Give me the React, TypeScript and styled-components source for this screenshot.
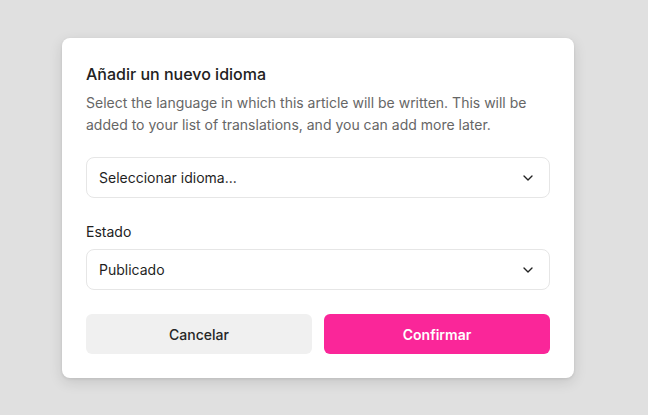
import React from "react";
import styled, { createGlobalStyle } from "styled-components";
import { ChevronDown } from "lucide-react";

const Global = createGlobalStyle`
  html, body { margin: 0; padding: 0; background: #e0e0e0; }
  body { font-family: Inter, "Noto Sans", sans-serif; -webkit-font-smoothing: antialiased; }
  * { box-sizing: border-box; }
`;

const Page = styled.div`
  width: 648px;
  height: 415px;
  display: flex;
  align-items: flex-start;
  padding: 38px 0 0 62px;
`;

const Card = styled.div`
  width: 512px;
  background: #ffffff;
  border-radius: 8px;
  box-shadow: 0 4px 14px rgba(0, 0, 0, 0.12), 0 1px 3px rgba(0, 0, 0, 0.08);
  padding: 24px;
  display: flex;
  flex-direction: column;
`;

const Title = styled.h2`
  margin: 0;
  font-size: 16px;
  line-height: 24px;
  font-weight: 500;
  color: #222222;
`;

const Description = styled.p`
  margin: 6px 0 0;
  font-size: 14px;
  line-height: 22px;
  color: #666666;
`;

const Field = styled.div<{ $top: number }>`
  margin-top: ${(p) => p.$top}px;
  display: flex;
  flex-direction: column;
  gap: 7px;
`;

const Label = styled.div`
  font-size: 14px;
  line-height: 20px;
  font-weight: 400;
  color: #222222;
`;

const Select = styled.div`
  height: 41px;
  border: 1px solid #e6e6e6;
  border-radius: 8px;
  padding: 0 13px 0 12px;
  display: flex;
  align-items: center;
  justify-content: space-between;
  font-size: 14px;
  color: #1f1f1f;
  background: #fff;
`;

const Actions = styled.div`
  margin-top: 24px;
  display: grid;
  grid-template-columns: 1fr 1fr;
  gap: 12px;
`;

const Button = styled.button<{ $primary?: boolean }>`
  height: 40px;
  border: none;
  border-radius: 6px;
  font-family: inherit;
  font-size: 14px;
  font-weight: ${(p) => (p.$primary ? 600 : 500)};
  background: ${(p) => (p.$primary ? "#fa2699" : "#f0f0f0")};
  color: ${(p) => (p.$primary ? "#ffffff" : "#262626")};
  cursor: pointer;
`;

export default function App() {
  return (
    <>
      <Global />
      <Page>
        <Card>
          <Title>Añadir un nuevo idioma</Title>
          <Description>
            Select the language in which this article will be written. This will be added to your list of
            translations, and you can add more later.
          </Description>
          <Field $top={21}>
            <Select>
              <span>Seleccionar idioma...</span>
              <ChevronDown size={16} strokeWidth={2} color="#222" />
            </Select>
          </Field>
          <Field $top={24}>
            <Label>Estado</Label>
            <Select>
              <span>Publicado</span>
              <ChevronDown size={16} strokeWidth={2} color="#222" />
            </Select>
          </Field>
          <Actions>
            <Button>Cancelar</Button>
            <Button $primary>Confirmar</Button>
          </Actions>
        </Card>
      </Page>
    </>
  );
}
